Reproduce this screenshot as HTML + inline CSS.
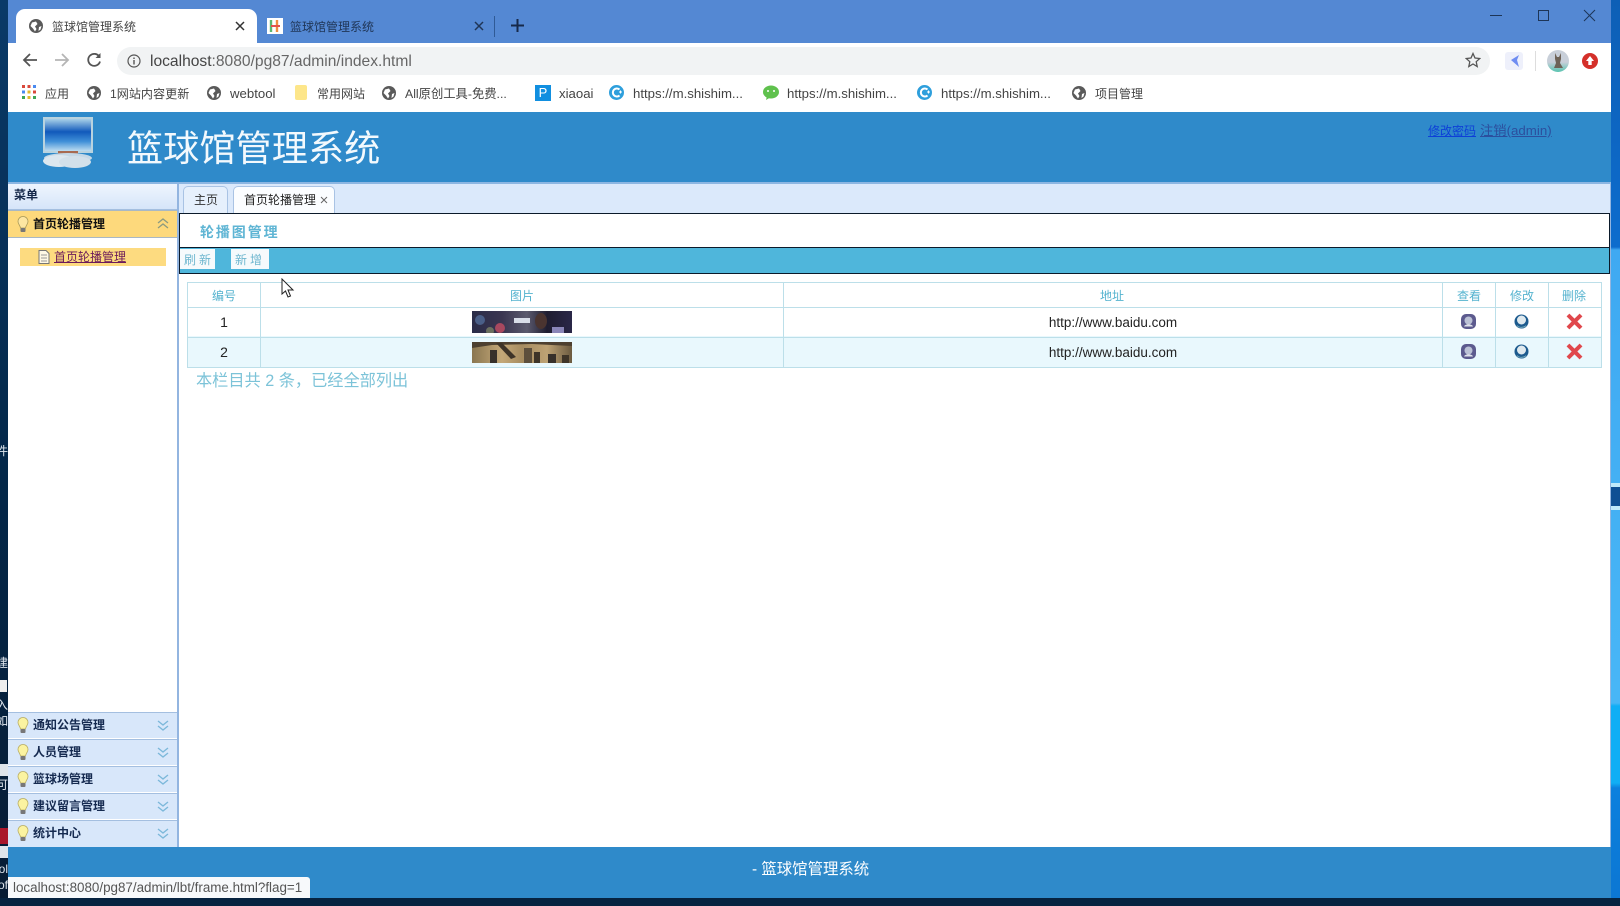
<!DOCTYPE html>
<html><head><meta charset="utf-8"><style>
html,body{margin:0;padding:0;width:1620px;height:906px;overflow:hidden;background:#062b52}
*{box-sizing:border-box}
body{position:relative;font-family:"Liberation Sans","Noto Sans CJK SC",sans-serif}
.a,.t,svg{position:absolute}
.t{white-space:nowrap;line-height:18px;height:18px}
.bm{font-size:12px;color:#444;top:85px}
.bl{font-size:13.2px}
.th{font-size:12px;color:#55b3cf;top:287px;width:80px;text-align:center}
.tc{font-size:13.5px;color:#222;width:200px;text-align:center}
.ac{position:absolute;left:8px;width:169px;height:26px;background:#d8e7fa;border-top:1px solid #a4bfe0}
.ac b{position:absolute;left:25px;top:3px;font-size:12px;line-height:18px;color:#152a50;font-weight:700}
.ln{position:absolute;background:#bcdfe9}
.lc{position:absolute;left:-5px;width:13px;height:14px;font-size:12px;line-height:14px;color:#dfe6ee;overflow:hidden;text-align:right;white-space:nowrap}
</style></head><body>
<svg width="0" height="0" style="position:absolute"><defs>
<g id="globe"><circle cx="7" cy="7" r="7" fill="#5a5a5a"/><path d="M3 3.500 7 2.500 8.500 5 6 7.500 7.500 10 6 12.500 4 9.500 1.500 7ZM10 8l2.500-1-1 3.500-2 1.500Z" fill="#fff"/></g>
<g id="cc"><circle cx="7.500" cy="7.500" r="7.500" fill="#2e9fdc"/><path d="M10.500 4.500A4 4 0 1 0 10.500 10.500" fill="none" stroke="#fff" stroke-width="2"/><path d="M10 7h3M11.500 5.500v3" stroke="#fff"/></g>
<g id="bulb"><path d="M6 .5C2.800.5 1 3 1 5.500c0 2.500 2 3.500 2.500 6.500h5C9 9 11 8 11 5.500 11 3 9.200.5 6 .5Z" fill="#fbf3a0" stroke="#b9ad62" stroke-width=".8"/><rect x="3.500" y="12" width="5" height="4" rx="1" fill="#777"/></g>
<g id="dn"><path d="M1 1l5 4 5-4M1 6l5 4 5-4" fill="none" stroke="#7cb8da" stroke-width="1.400"/></g>
<g id="view"><rect width="15" height="15" rx="5" fill="#5c5a8e"/><circle cx="7.500" cy="6.500" r="4" fill="#bcc2d6"/><path d="M3 12.500c1-3 8-3 9 0Z" fill="#dfe2ea"/></g>
<g id="edit"><circle cx="7.500" cy="7.500" r="7" fill="#1c5a8e"/><ellipse cx="7.500" cy="6" rx="4.500" ry="4.500" fill="#dfe9ee"/><path d="M3 11.500c2 2.500 7 2.500 9 0" fill="none" stroke="#7ab" stroke-width="1"/></g>
<g id="del"><path d="M2.500 4 5 1.500 9.500 6 14 1.500 16.500 4 12 8.500 16.500 13 14 15.500 9.500 11 5 15.500 2.500 13 7 8.500Z" fill="#e0474c"/></g>
</defs></svg>

<!-- desktop edges -->
<div class="a" style="left:0;top:0;width:8px;height:906px;background:linear-gradient(#0a3a68,#04284a 50%,#071c34)"></div>
<div class="a" style="left:1611px;top:0;width:9px;height:906px;background:linear-gradient(#0d5fb6 0,#0d6ccd 247px,#3fa9f2 250px,#48b6f6 703px,#10aef5 706px,#10aef5 783px,#0c80de 788px,#0c76d2 906px)"></div>
<div class="a" style="left:1611px;top:483px;width:9px;height:4px;background:#bfe9fb"></div>
<div class="a" style="left:1611px;top:487px;width:9px;height:19px;background:#0f4f94"></div>
<div class="a" style="left:1611px;top:506px;width:9px;height:4px;background:#bfe9fb"></div>
<div class="lc" style="top:444px">件</div>
<div class="lc" style="top:656px">建</div>
<div class="a" style="left:0;top:680px;width:7px;height:12px;background:#eee"></div>
<div class="lc" style="top:698px">入</div>
<div class="lc" style="top:714px">如</div>
<div class="a" style="left:0;top:764px;width:8px;height:12px;background:#dfe5ea"></div>
<div class="lc" style="top:778px">可</div>
<div class="a" style="left:0;top:828px;width:8px;height:16px;background:#a9172b"></div>
<div class="a" style="left:0;top:846px;width:8px;height:12px;background:#dfe5ea"></div>
<div class="lc" style="top:862px">ol</div>
<div class="lc" style="top:878px">of</div>
<div class="a" style="left:0;top:898px;width:1620px;height:8px;background:#062340"></div>

<!-- chrome -->
<div class="a" style="left:8px;top:0;width:1603px;height:43px;background:#5488d3"></div>
<div class="a" style="left:16px;top:9px;width:241px;height:34px;background:#fff;border-radius:9px 9px 0 0"></div>
<svg style="left:29px;top:19px" width="14" height="14"><use href="#globe"/></svg>
<div class="t" style="left:52px;top:18px;font-size:12px;color:#444">篮球馆管理系统</div>
<svg style="left:235px;top:21px" width="10" height="10"><path d="M1 1l8 8M9 1 1 9" stroke="#333" stroke-width="1.500"/></svg>
<div class="a" style="left:267px;top:18px;width:16px;height:16px;background:#fff"></div>
<svg style="left:268px;top:19px" width="14" height="14"><path d="M3 1v12" stroke="#5db870" stroke-width="2.400"/><path d="M9 1v12" stroke="#ef8d3f" stroke-width="2.400"/><path d="M3 7h9" stroke="#e2524c" stroke-width="2"/></svg>
<div class="t" style="left:290px;top:18px;font-size:12px;color:#1f3556">篮球馆管理系统</div>
<svg style="left:474px;top:21px" width="10" height="10"><path d="M1 1l8 8M9 1 1 9" stroke="#1f3556" stroke-width="1.500"/></svg>
<div class="a" style="left:494px;top:16px;width:1px;height:21px;background:#2f5a96"></div>
<svg style="left:511px;top:19px" width="13" height="13"><path d="M6.500 0v13M0 6.500h13" stroke="#16294a" stroke-width="2"/></svg>
<div class="a" style="left:1490px;top:15px;width:12px;height:1px;background:#1d3557"></div>
<div class="a" style="left:1538px;top:10px;width:11px;height:11px;border:1px solid #1d3557"></div>
<svg style="left:1583px;top:9px" width="13" height="13"><path d="M1 1l11 11M12 1 1 12" stroke="#1d3557" stroke-width="1"/></svg>

<div class="a" style="left:8px;top:43px;width:1603px;height:69px;background:#fff"></div>
<svg style="left:22px;top:52px" width="16" height="16"><path d="M15 8H2M8 2 2 8l6 6" fill="none" stroke="#555" stroke-width="1.800"/></svg>
<svg style="left:54px;top:52px" width="16" height="16"><path d="M1 8h13M8 2l6 6-6 6" fill="none" stroke="#b5b5b5" stroke-width="1.800"/></svg>
<svg style="left:86px;top:52px" width="16" height="16"><path d="M13.500 5A6 6 0 1 0 14 9.500" fill="none" stroke="#555" stroke-width="1.800"/><path d="M14.500 1v5h-5Z" fill="#555"/></svg>
<div class="a" style="left:117px;top:47px;width:1373px;height:28px;border-radius:14px;background:#f1f3f4"></div>
<svg style="left:127px;top:54px" width="14" height="14"><circle cx="7" cy="7" r="6" fill="none" stroke="#555" stroke-width="1.200"/><path d="M7 6v4.500M7 3.500v1.500" stroke="#555" stroke-width="1.400"/></svg>
<div class="t" style="left:150px;top:53px;font-size:15.6px;color:#444">localhost<span style="color:#666">:8080/pg87/admin/index.html</span></div>
<svg style="left:1465px;top:52px" width="16" height="16"><path d="M8 1.500l2 4.500 4.800.5-3.600 3.200 1 4.800L8 12l-4.200 2.500 1-4.800L1.200 6.500 6 6Z" fill="none" stroke="#555" stroke-width="1.300"/></svg>
<svg style="left:1505px;top:52px" width="18" height="18"><rect width="18" height="18" rx="3" fill="#eef0fb"/><path d="M14 3 6 8l8 7-2-7Z" fill="#6f8df2"/></svg>
<div class="a" style="left:1535px;top:51px;width:1px;height:20px;background:#ddd"></div>
<div class="a" style="left:1547px;top:50px;width:22px;height:22px;border-radius:50%;background:linear-gradient(#c8cfd9 55%,#58c3b0)"></div>
<svg style="left:1551px;top:52px" width="14" height="18"><path d="M4 1l2 4h2l2-4v6l-1 4 3 5H3l2-5-1-4Z" fill="#6d6257"/></svg>
<svg style="left:1582px;top:53px" width="16" height="16"><circle cx="8" cy="8" r="8" fill="#d4302a"/><path d="M8 3l4 5H9.700v4H6.300V8H4Z" fill="#fff"/></svg>

<!-- bookmarks -->
<svg style="left:22px;top:85px" width="14" height="14"><g fill="#d9483b"><rect width="3" height="3"/><rect x="5.500" width="3" height="3"/></g><rect x="11" width="3" height="3" fill="#4a8af0"/><rect y="5.500" width="3" height="3" fill="#4a8af0"/><rect x="5.500" y="5.500" width="3" height="3" fill="#e2b92f"/><rect x="11" y="5.500" width="3" height="3" fill="#d9483b"/><rect y="11" width="3" height="3" fill="#3ea654"/><rect x="5.500" y="11" width="3" height="3" fill="#e2b92f"/><rect x="11" y="11" width="3" height="3" fill="#3ea654"/></svg>
<div class="t bm" style="left:45px">应用</div>
<svg style="left:87px;top:86px" width="14" height="14"><use href="#globe"/></svg>
<div class="t bm" style="left:110px;font-size:12.1px">1网站内容更新</div>
<svg style="left:207px;top:86px" width="14" height="14"><use href="#globe"/></svg>
<div class="t bm bl" style="left:230px">webtool</div>
<div class="a" style="left:295px;top:85px;width:12px;height:15px;background:#fde68a;border-radius:2px"></div>
<div class="t bm" style="left:317px">常用网站</div>
<svg style="left:382px;top:86px" width="14" height="14"><use href="#globe"/></svg>
<div class="t bm" style="left:405px;font-size:12.3px">All原创工具-免费...</div>
<div class="a" style="left:535px;top:85px;width:16px;height:16px;background:#118fe0;color:#fff;font-size:13px;line-height:16px;text-align:center">P</div>
<div class="t bm bl" style="left:559px">xiaoai</div>
<svg style="left:609px;top:85px" width="15" height="15"><use href="#cc"/></svg>
<div class="t bm bl" style="left:633px">https://m.shishim...</div>
<svg style="left:763px;top:85px" width="16" height="15"><ellipse cx="8" cy="7" rx="8" ry="6.500" fill="#5fc14d"/><path d="M4 11 3 15l5-3Z" fill="#5fc14d"/><circle cx="5" cy="6" r="1" fill="#fff"/><circle cx="11" cy="6" r="1" fill="#fff"/></svg>
<div class="t bm bl" style="left:787px">https://m.shishim...</div>
<svg style="left:917px;top:85px" width="15" height="15"><use href="#cc"/></svg>
<div class="t bm bl" style="left:941px">https://m.shishim...</div>
<svg style="left:1072px;top:86px" width="14" height="14"><use href="#globe"/></svg>
<div class="t bm" style="left:1095px">项目管理</div>

<!-- header -->
<div class="a" style="left:8px;top:112px;width:1603px;height:70px;background:#2f8aca"></div>
<div class="a" style="left:8px;top:182px;width:1603px;height:2px;background:#8cb6e2"></div>
<svg style="left:39px;top:115px" width="56" height="55"><defs><linearGradient id="mon" x1="0" y1="0" x2="0" y2="1"><stop offset="0" stop-color="#a8d0e8"/><stop offset=".4" stop-color="#1159bb"/><stop offset=".7" stop-color="#3f8fd8"/><stop offset="1" stop-color="#bcdcf0"/></linearGradient></defs><rect x="4" y="2" width="50" height="36" fill="#b9d3df"/><rect x="6" y="4" width="46" height="32" fill="url(#mon)"/><rect x="19" y="36" width="20" height="3" fill="#a86a50"/><ellipse cx="29" cy="43" rx="24" ry="5" fill="#c5d8e6"/><ellipse cx="20" cy="46" rx="16" ry="6" fill="#dce7ef"/><ellipse cx="36" cy="47" rx="16" ry="6" fill="#d2e0ea"/></svg>
<div class="t" style="left:127px;top:128px;font-size:36.2px;line-height:42px;height:42px;color:#f3f9fd">篮球馆管理系统</div>
<div class="t" style="left:1428px;top:122px;font-size:12px;color:#0d3fd8;text-decoration:underline">修改密码</div>
<div class="t" style="left:1480px;top:122px;font-size:13.3px;color:#2c4f9e;text-decoration:underline">注销(admin)</div>

<!-- main area -->
<div class="a" style="left:8px;top:184px;width:1603px;height:663px;background:#fff"></div>
<div class="a" style="left:177px;top:184px;width:2px;height:663px;background:#93b5e0"></div>
<div class="a" style="left:179px;top:184px;width:1431px;height:30px;background:#dbe9fb"></div>
<div class="a" style="left:1610px;top:184px;width:1px;height:663px;background:#93b5e0"></div>

<!-- sidebar -->
<div class="a" style="left:8px;top:184px;width:169px;height:26px;background:linear-gradient(#eef5fe,#d6e5f9);border-bottom:1px solid #a4bfe0"></div>
<div class="t" style="left:14px;top:186px;font-size:12px;font-weight:700;color:#16294a">菜单</div>
<div class="a" style="left:8px;top:210px;width:169px;height:28px;background:#fdd97c;border-top:1px solid #a9b8c4;border-bottom:1px solid #a9b8c4"></div>
<svg style="left:17px;top:216px" width="12" height="17"><path d="M6 .5C2.800.5 1 3 1 5.500c0 2.500 2 3.500 2.500 6.500h5C9 9 11 8 11 5.500 11 3 9.200.5 6 .5Z" fill="#fde6a2" stroke="#a8995a" stroke-width=".8"/><rect x="3.500" y="12" width="5" height="4" rx="1" fill="#777"/></svg>
<div class="t" style="left:33px;top:215px;font-size:12px;font-weight:700;color:#111">首页轮播管理</div>
<svg style="left:157px;top:218px" width="12" height="11"><path d="M1 5l5-4 5 4M1 10l5-4 5 4" fill="none" stroke="#8b9a80" stroke-width="1.300"/></svg>
<div class="a" style="left:20px;top:248px;width:146px;height:18px;background:#fddb80"></div>
<svg style="left:38px;top:250px" width="12" height="14"><path d="M1 .5h7l3 3v10H1Z" fill="#fff8e4" stroke="#777"/><path d="M3 5h6M3 8h6M3 11h6" stroke="#999"/></svg>
<div class="t" style="left:54px;top:248px;font-size:12px;color:#6b1a5a;text-decoration:underline">首页轮播管理</div>

<div class="ac" style="top:712px"><svg style="position:absolute;left:9px;top:4px" width="12" height="17"><use href="#bulb"/></svg><b>通知公告管理</b><svg style="position:absolute;left:149px;top:7px" width="12" height="11"><use href="#dn"/></svg></div>
<div class="ac" style="top:739px"><svg style="position:absolute;left:9px;top:4px" width="12" height="17"><use href="#bulb"/></svg><b>人员管理</b><svg style="position:absolute;left:149px;top:7px" width="12" height="11"><use href="#dn"/></svg></div>
<div class="ac" style="top:766px"><svg style="position:absolute;left:9px;top:4px" width="12" height="17"><use href="#bulb"/></svg><b>篮球场管理</b><svg style="position:absolute;left:149px;top:7px" width="12" height="11"><use href="#dn"/></svg></div>
<div class="ac" style="top:793px"><svg style="position:absolute;left:9px;top:4px" width="12" height="17"><use href="#bulb"/></svg><b>建议留言管理</b><svg style="position:absolute;left:149px;top:7px" width="12" height="11"><use href="#dn"/></svg></div>
<div class="ac" style="top:820px;height:27px"><svg style="position:absolute;left:9px;top:4px" width="12" height="17"><use href="#bulb"/></svg><b>统计中心</b><svg style="position:absolute;left:149px;top:7px" width="12" height="11"><use href="#dn"/></svg></div>

<!-- content tabs -->
<div class="a" style="left:183px;top:186px;width:45px;height:27px;background:#e6f0fc;border:1px solid #a9c3e4;border-bottom:0;border-radius:5px 5px 0 0"></div>
<div class="t" style="left:194px;top:191px;font-size:12px;color:#333">主页</div>
<div class="a" style="left:233px;top:186px;width:102px;height:28px;background:#fbfdff;border:1px solid #a9c3e4;border-bottom:0;border-radius:5px 5px 0 0"></div>
<div class="t" style="left:244px;top:191px;font-size:12px;color:#222">首页轮播管理</div>
<svg style="left:320px;top:196px" width="8" height="8"><path d="M1 1l6 6M7 1 1 7" stroke="#666" stroke-width="1"/></svg>

<!-- content head -->
<div class="a" style="left:179px;top:213px;width:1431px;height:35px;background:#fff;border:1px solid #0b1a2a"></div>
<div class="t" style="left:200px;top:223px;font-size:14px;font-weight:700;letter-spacing:1.9px;color:#5fb5d4">轮播图管理</div>
<div class="a" style="left:179px;top:247px;width:1431px;height:27px;background:#4fb6db;border:1px solid #0b1a2a"></div>
<div class="a" style="left:180px;top:249px;width:35px;height:20px;background:#f6fafc"></div>
<div class="t" style="left:184px;top:251px;font-size:12px;letter-spacing:3px;color:#6fb7cf">刷新</div>
<div class="a" style="left:231px;top:249px;width:38px;height:20px;background:#f6fafc"></div>
<div class="t" style="left:235px;top:251px;font-size:12px;letter-spacing:3px;color:#6fb7cf">新增</div>

<!-- table -->
<div class="a" style="left:187px;top:336px;width:1415px;height:31px;background:#e9f8fd"></div>
<div class="ln" style="left:187px;top:282px;width:1415px;height:1px"></div>
<div class="ln" style="left:187px;top:307px;width:1415px;height:1px"></div>
<div class="ln" style="left:187px;top:337px;width:1415px;height:1px"></div>
<div class="ln" style="left:187px;top:367px;width:1415px;height:1px"></div>
<div class="ln" style="left:187px;top:282px;width:1px;height:86px"></div>
<div class="ln" style="left:260px;top:282px;width:1px;height:86px"></div>
<div class="ln" style="left:783px;top:282px;width:1px;height:86px"></div>
<div class="ln" style="left:1442px;top:282px;width:1px;height:86px"></div>
<div class="ln" style="left:1495px;top:282px;width:1px;height:86px"></div>
<div class="ln" style="left:1548px;top:282px;width:1px;height:86px"></div>
<div class="ln" style="left:1601px;top:282px;width:1px;height:86px"></div>
<div class="t th" style="left:184px">编号</div>
<div class="t th" style="left:482px">图片</div>
<div class="t th" style="left:1072px">地址</div>
<div class="t th" style="left:1429px">查看</div>
<div class="t th" style="left:1482px">修改</div>
<div class="t th" style="left:1534px">删除</div>

<div class="t tc" style="left:124px;top:313px;font-size:14px">1</div>
<div class="t tc" style="left:124px;top:343px;font-size:14px">2</div>
<svg style="left:472px;top:311px" width="100" height="22"><defs><linearGradient id="g1"><stop offset="0" stop-color="#2a2c48"/><stop offset=".3" stop-color="#3a3550"/><stop offset=".55" stop-color="#5b5a6e"/><stop offset=".75" stop-color="#1f1d30"/><stop offset="1" stop-color="#2a2748"/></linearGradient></defs><rect width="100" height="22" fill="url(#g1)"/><circle cx="8" cy="9" r="5" fill="#4a5f88"/><circle cx="28" cy="17" r="5" fill="#a8485f"/><circle cx="18" cy="20" r="4" fill="#6b7060"/><rect x="42" y="7" width="16" height="5" fill="#d8dde8"/><ellipse cx="69" cy="10" rx="6" ry="8" fill="#4a3430"/><rect x="80" y="16" width="12" height="6" fill="#8a86b8"/></svg>
<svg style="left:472px;top:342px" width="100" height="21"><defs><linearGradient id="g2"><stop offset="0" stop-color="#8a7650"/><stop offset=".3" stop-color="#c4a878"/><stop offset=".5" stop-color="#a68c60"/><stop offset=".75" stop-color="#bda274"/><stop offset="1" stop-color="#6b5a40"/></linearGradient></defs><rect width="100" height="21" fill="url(#g2)"/><path d="M0 0h100v4L60 2 20 3 0 6Z" fill="#4d4030"/><path d="M24 1l6 0 14 14-5 2Z" fill="#3e3428"/><rect x="18" y="8" width="7" height="13" fill="#37302a"/><rect x="52" y="6" width="8" height="15" fill="#5d4f3c"/><rect x="62" y="10" width="6" height="11" fill="#3e3428"/><rect x="76" y="12" width="8" height="9" fill="#37302a"/><rect x="90" y="13" width="7" height="8" fill="#3e3428"/></svg>
<div class="t tc" style="left:1013px;top:314px">http://www.baidu.com</div>
<div class="t tc" style="left:1013px;top:344px">http://www.baidu.com</div>
<svg style="left:1461px;top:314px" width="15" height="15"><use href="#view"/></svg>
<svg style="left:1514px;top:314px" width="15" height="15"><use href="#edit"/></svg>
<svg style="left:1566px;top:313px" width="17" height="17" viewBox="2 1 15 15"><use href="#del"/></svg>
<svg style="left:1461px;top:344px" width="15" height="15"><use href="#view"/></svg>
<svg style="left:1514px;top:344px" width="15" height="15"><use href="#edit"/></svg>
<svg style="left:1566px;top:343px" width="17" height="17" viewBox="2 1 15 15"><use href="#del"/></svg>
<div class="t" style="left:196px;top:372px;font-size:16.2px;line-height:18px;color:#7cc3d8">本栏目共 2 条，已经全部列出</div>

<!-- cursor -->
<svg style="left:281px;top:278px" width="14" height="21"><path d="M1 1v15l3.500-3 2.500 6 2.500-1-2.500-6h5Z" fill="#fff" stroke="#222"/></svg>

<!-- footer -->
<div class="a" style="left:8px;top:847px;width:1603px;height:51px;background:#2f8aca"></div>
<div class="t" style="left:752px;top:861px;font-size:15.4px;color:#fff">- 篮球馆管理系统</div>
<div class="a" style="left:8px;top:877px;width:302px;height:21px;background:#f7f9fb;border-radius:0 3px 0 0"></div>
<div class="t" style="left:13px;top:879px;font-size:13.4px;color:#555">localhost:8080/pg87/admin/lbt/frame.html?flag=1</div>
</body></html>
